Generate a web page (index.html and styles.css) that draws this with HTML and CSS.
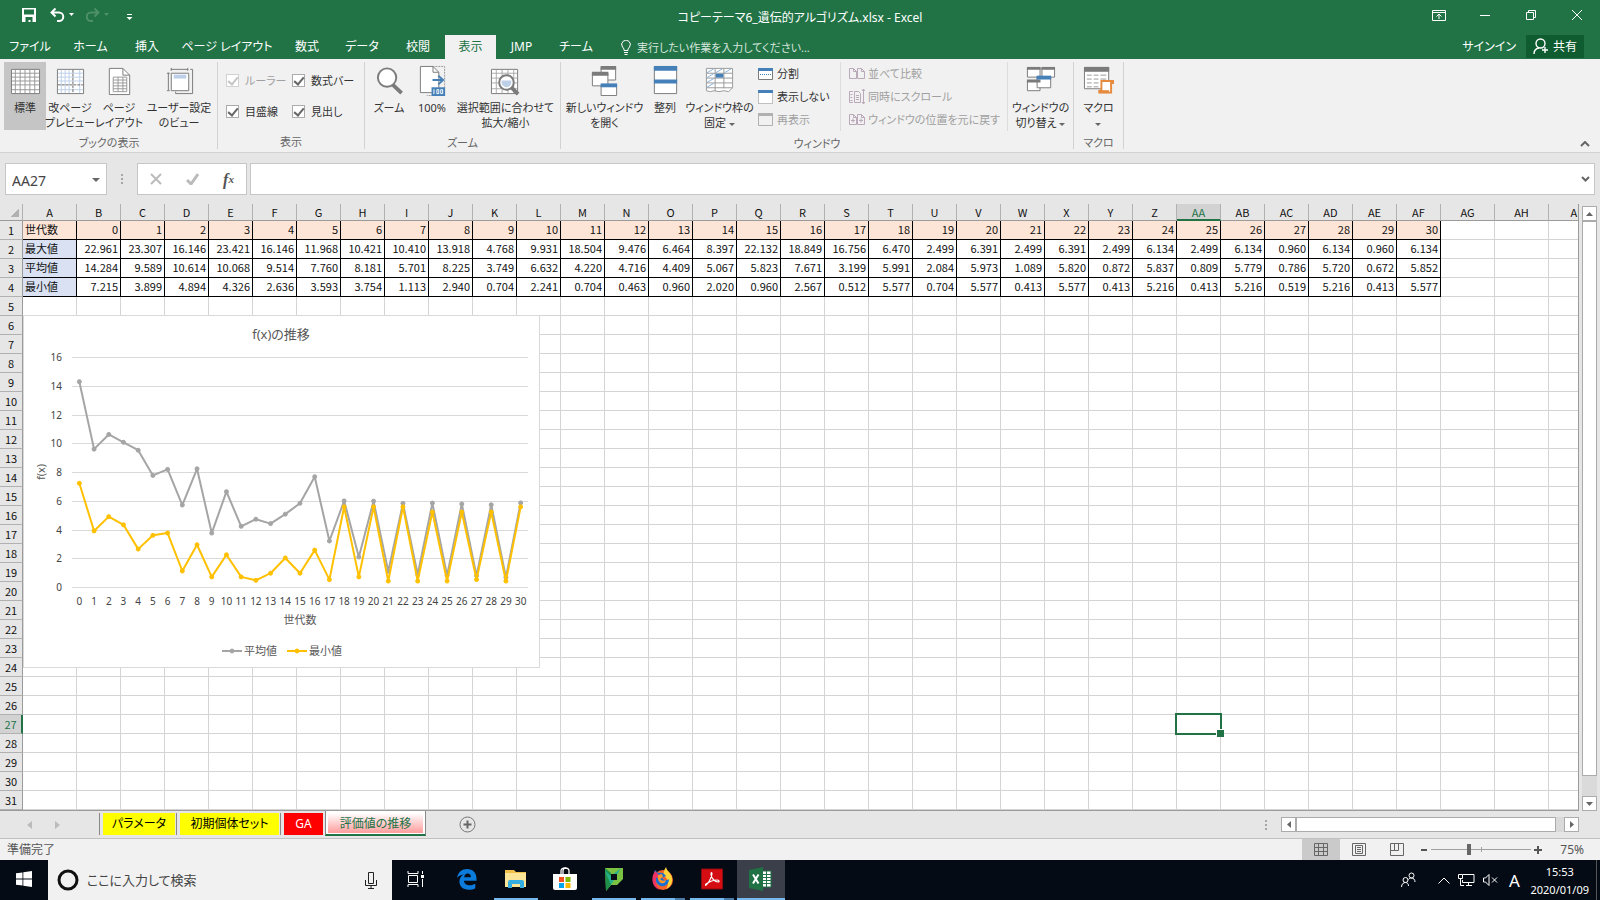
FILE: index.html
```html
<!DOCTYPE html>
<html lang="ja">
<head>
    <meta charset="UTF-8">
    <meta name="viewport" content="width=device-width, initial-scale=1.0">
    <title>コピーテーマ6_遺伝的アルゴリズム.xlsx - Excel</title>
    <link rel="stylesheet" href="styles.css">
</head>
<body>
    <header class="title-bar">
        <div class="quick-access">
            <button type="button" aria-label="上書き保存"><svg width="14" height="14" viewBox="0 0 14 14"><path d="M0 0h14v14H0z" fill="#fff"/><path d="M2 1.500h10v5H2zM3.500 9h7v5h-2v-2h-2v2h-3z" fill="#217346"/></svg></button>
            <button type="button" class="undo" aria-label="元に戻す"><svg width="24" height="14" viewBox="0 0 24 14"><path d="M5.500 0.500L1.500 4.500l4 4M1.500 4.500h7.500a4 4 0 0 1 0 8.500h-2" fill="none" stroke="#fff" stroke-width="2"/><path d="M19 5h5l-2.500 3z" fill="#fff"/></svg></button>
            <button type="button" class="redo" aria-label="やり直し"><svg width="24" height="14" viewBox="0 0 24 14"><path d="M8.500 0.500l4 4-4 4M12.500 4.500H5a4 4 0 0 0 0 8.500h2" fill="none" stroke="#4d9069" stroke-width="2"/><path d="M18 5h5l-2.500 3z" fill="#4d9069"/></svg></button>
            <button type="button" aria-label="クイック アクセス ツール バーのカスタマイズ"><svg width="7" height="8" viewBox="0 0 7 8"><path d="M1 1.500h5" stroke="#fff"/><path d="M0.500 4h6l-3 3z" fill="#fff"/></svg></button>
        </div>
        <div class="book-title">コピーテーマ6_遺伝的アルゴリズム.xlsx - Excel</div>
        <div class="window-buttons">
            <button type="button" aria-label="リボンの表示オプション"><svg width="14" height="11" viewBox="0 0 14 11"><path d="M0.500 0.500h13v10H0.500zM0.500 2.500h13M7 9V4.500M4.500 6.500L7 4l2.500 2.500" fill="none" stroke="#fff"/></svg></button>
            <button type="button" aria-label="最小化"><svg width="10" height="10" viewBox="0 0 10 10"><path d="M0 5.500h10" stroke="#fff"/></svg></button>
            <button type="button" aria-label="元に戻す(縮小)"><svg width="10" height="10" viewBox="0 0 10 10"><path d="M0.500 2.500h7v7h-7zM2.500 2.500v-2h7v7h-2" fill="none" stroke="#fff"/></svg></button>
            <button type="button" aria-label="閉じる"><svg width="10" height="10" viewBox="0 0 10 10"><path d="M0 0l10 10M10 0L0 10" stroke="#fff"/></svg></button>
        </div>
    </header>

    <nav class="ribbon-tabs">
        <div class="tab-list">
            <button type="button">ファイル</button>
            <button type="button">ホーム</button>
            <button type="button">挿入</button>
            <button type="button">ページ レイアウト</button>
            <button type="button">数式</button>
            <button type="button">データ</button>
            <button type="button">校閲</button>
            <button type="button" class="active">表示</button>
            <button type="button">JMP</button>
            <button type="button">チーム</button>
        </div>
        <label class="tell-me">
            <svg width="10" height="15" viewBox="0 0 10 15"><path d="M3 10.500V9L1.500 7a4.300 4.300 0 1 1 7 0L7 9v1.500zM3 12.500h4M3.500 14.500h3" fill="none" stroke="#fff"/></svg>
            <input type="text" aria-label="操作アシスト" placeholder="実行したい作業を入力してください...">
        </label>
        <button type="button" class="sign-in">サインイン</button>
        <button type="button" class="share">
            <svg width="16" height="17" viewBox="0 0 16 17"><circle cx="7.500" cy="5.500" r="4.500"/><path d="M1 16c0-3 2-5.500 5-6M12 9v6M9 12h6"/></svg>
            共有
        </button>
    </nav>

    <section class="ribbon">
        <div class="group group-book">
            <div class="tools">
                <button type="button" class="tool pressed">
                    <svg viewBox="0 0 32 32"><path d="M1.500 4.500h29v25h-29z" fill="#fff" stroke="#7b7b7b"/><path d="M2 8.500h28M2 12.500h28M2 16.500h28M2 20.500h28M2 25.500h28M5.500 5v24M10.500 5v24M15.500 5v24M20.500 5v24M25.500 5v24" stroke="#999"/></svg>
                    <span>標準</span>
                </button>
                <button type="button" class="tool">
                    <svg viewBox="0 0 32 32"><path d="M2.500 4.500h27v25h-27z" fill="#fff" stroke="#7b7b7b"/><path d="M3 8.500h26M3 12.500h26M3 16.500h26M3 25.500h26M6.500 5v24M10.500 5v24M14.500 5v24M25.500 5v24" stroke="#bdd0e8"/><path d="M3 20.500h26M18.500 5v24" stroke="#666" stroke-dasharray="3 1"/></svg>
                    <span>改ページ<br>プレビュー</span>
                </button>
                <button type="button" class="tool">
                    <svg viewBox="0 0 32 32"><path d="M5.500 3.500h14l7 7v20h-21z" fill="#fff" stroke="#7b7b7b"/><path d="M19.500 3.500v7h7" fill="none" stroke="#7b7b7b"/><path d="M9.500 12.500h14v15h-14zM9.500 15.500h14M9.500 18.500h14M9.500 21.500h14M9.500 24.500h14M14.500 12.500v15M19.500 12.500v15" fill="none" stroke="#999"/></svg>
                    <span>ページ<br>レイアウト</span>
                </button>
                <button type="button" class="tool">
                    <svg viewBox="0 0 32 32"><path d="M7.500 8.500h18v18h-18z" fill="#fff" stroke="#7b7b7b"/><path d="M10 10h13v4H10z" fill="#bdd0e8"/><path d="M7 4.500h18M7.500 3v3M24.500 3v3M4.500 8v18M3 8.500h3M3 26.500h3M27 4.500h2.500v25H12v-2" fill="none" stroke="#7b7b7b"/></svg>
                    <span>ユーザー設定<br>のビュー</span>
                </button>
            </div>
            <div class="group-name">ブックの表示</div>
        </div>

        <div class="group group-show">
            <div class="checks">
                <label class="disabled"><input type="checkbox" checked disabled>ルーラー</label>
                <label><input type="checkbox" checked>数式バー</label>
                <label><input type="checkbox" checked>目盛線</label>
                <label><input type="checkbox" checked>見出し</label>
            </div>
            <div class="group-name">表示</div>
        </div>

        <div class="group group-zoom">
            <div class="tools">
                <button type="button" class="tool">
                    <svg viewBox="0 0 32 32"><path d="M19 20l9.500 9" stroke="#7b7b7b" stroke-width="4"/><circle cx="13.500" cy="13" r="9.500" fill="#fff" stroke="#7b7b7b" stroke-width="2"/></svg>
                    <span>ズーム</span>
                </button>
                <button type="button" class="tool">
                    <svg viewBox="0 0 32 32"><path d="M16 1.500h12.500v30H10" fill="none" stroke="#999" stroke-dasharray="2 1"/><path d="M3.500 1.500h13l6 6v21h-19z" fill="#fff" stroke="#7b7b7b"/><path d="M16.500 1.500v6h6" fill="none" stroke="#7b7b7b"/><path d="M16 15.500h10M22 11l5 4.500-5 4.500" fill="none" stroke="#4680b8" stroke-width="2"/><path d="M15 23h14v9H15z" fill="#4680b8"/><path d="M17.500 25v5M20.500 25.500h2v4h-2zM24.500 25.500h2v4h-2z" fill="none" stroke="#fff"/></svg>
                    <span>100%</span>
                </button>
                <button type="button" class="tool">
                    <svg viewBox="0 0 32 32"><path d="M1.500 4.500h27v25h-27z" fill="#fff" stroke="#7b7b7b"/><path d="M2 8.500h26M2 13.500h26M2 18.500h26M2 24.500h26M6.500 5v24M12.500 5v24M18.500 5v24M24.500 5v24" stroke="#aaa"/><path d="M21 22l8 8" stroke="#7b7b7b" stroke-width="4"/><circle cx="17" cy="18" r="7.500" fill="#fff" stroke="#7b7b7b" stroke-width="2"/><path d="M12 16h10v2a5 5 0 0 1-10 0z" fill="#bdd0e8"/></svg>
                    <span>選択範囲に合わせて<br>拡大/縮小</span>
                </button>
            </div>
            <div class="group-name">ズーム</div>
        </div>

        <div class="group group-window">
            <div class="tools">
                <button type="button" class="tool">
                    <svg viewBox="0 0 32 32"><g fill="#fff" stroke="#7b7b7b"><path d="M12.500 2.500h15v13h-15z"/><path d="M3.500 8.500h16v13h-16z"/><path d="M12.500 20.500h16v11h-16z"/></g><path d="M12 1h16v4H12zM3 7h17v4H3z" fill="#7b7b7b"/><path d="M12 19h17v4H12z" fill="#4680b8"/></svg>
                    <span>新しいウィンドウ<br>を開く</span>
                </button>
                <button type="button" class="tool">
                    <svg viewBox="0 0 32 32"><path d="M4.500 1.500h23v28h-23z" fill="#fff" stroke="#7b7b7b"/><path d="M4 1h24v5H4zM4 15h24v4H4z" fill="#4680b8"/></svg>
                    <span>整列</span>
                </button>
                <button type="button" class="tool">
                    <svg viewBox="0 0 32 32"><path d="M2.500 3.500h27v20l-4 4-5-1-5 1-5-1-4 1-4-1z" fill="#fff" stroke="#999"/><path d="M3 8.500h26M3 13.500h26M3 18.500h26M3 23.500h26M11.500 4v23M20.500 4v20" stroke="#999"/><path d="M3 8l7-4M12 8l7-4M21 8l7-4M3 13l7-4M3 18l7-4M3 23l7-4" stroke="#8bb1dc"/><path d="M12 9h8v4h-8z" fill="#4680b8"/></svg>
                    <span>ウィンドウ枠の<br>固定 <i class="caret"></i></span>
                </button>
                <div class="small-tools">
                    <button type="button"><svg viewBox="0 0 16 16"><path d="M0.500 2.500h14v11H0.500z" fill="#fff" stroke="#7b7b7b"/><path d="M0 2h15v3H0z" fill="#4680b8"/><path d="M2 8.500h12" stroke="#4680b8" stroke-dasharray="1 1"/></svg>分割</button>
                    <button type="button"><svg viewBox="0 0 16 16"><path d="M0.500 1.500h14v13H0.500z" fill="#fff" stroke="#888" stroke-dasharray="1 1"/><path d="M0 1h15v3H0z" fill="#4680b8"/></svg>表示しない</button>
                    <button type="button" disabled><svg viewBox="0 0 16 16"><path d="M0.500 1.500h14v12H0.500z" fill="#f1f1f1" stroke="#b1b1b1"/><path d="M0 1h15v3H0z" fill="#b1b1b1"/></svg>再表示</button>
                </div>
                <div class="small-tools compare">
                    <button type="button" disabled><svg viewBox="0 0 16 16"><path d="M0.500 2.500h4l3 3v7h-7zM8.500 2.500h4l3 3v7h-7zM4.500 2.500v3h3M12.500 2.500v3h3" fill="none" stroke="#b9a9b9"/></svg>並べて比較</button>
                    <button type="button" disabled><svg viewBox="0 0 16 16"><path d="M4 2.500H0.500v11H4M5.500 2.500h4l2 2v9h-6zM7 6.500h3M7 8.500h3M7 10.500h3M1.500 5.500h2M1.500 8.500h2M1.500 11.500h2M14.500 0v15M13 2l1.500-2L16 2M13 13l1.500 2 1.500-2" fill="none" stroke="#b9a9b9"/></svg>同時にスクロール</button>
                    <button type="button" disabled><svg viewBox="0 0 16 16"><path d="M0.500 2.500h4l3 3v7h-7zM8.500 2.500h4l3 3v7h-7zM4.500 2.500v3h3M12.500 2.500v3h3M2 8.500h4M4 6.500v4M10 8.500h4M12 6.500v4" fill="none" stroke="#b9a9b9"/></svg>ウィンドウの位置を元に戻す</button>
                </div>
                <button type="button" class="tool">
                    <svg viewBox="0 0 32 32"><g fill="#fff" stroke="#7b7b7b"><path d="M2.500 2.500h13v10h-13z"/><path d="M17.500 2.500h13v10h-13z"/><path d="M2.500 16.500h13v10h-13z"/><path d="M12.500 12.500h14v11h-14z"/></g><path d="M2 2h14v3H2zM17 2h14v3H17zM2 15h14v3H2z" fill="#7b7b7b"/><path d="M12 11h15v4H12z" fill="#4680b8"/></svg>
                    <span>ウィンドウの<br>切り替え <i class="caret"></i></span>
                </button>
            </div>
            <div class="group-name">ウィンドウ</div>
        </div>

        <div class="group group-macro">
            <div class="tools">
                <button type="button" class="tool">
                    <svg viewBox="0 0 32 32"><path d="M1.500 2.500h25v22h-25z" fill="#fff" stroke="#7b7b7b"/><path d="M1 2h26v5H1z" fill="#7b7b7b"/><path d="M4 10.500h5M11 10.500h5M18 10.500h6M4 14.500h5M11 14.500h5M18 14.500h6M4 18.500h5M11 18.500h5M4 22.500h5M11 22.500h5" stroke="#999"/><path d="M19 16.500h12v2h-2v10h-12v-2h2z" fill="#fff" stroke="#e68a3e" stroke-width="2"/><path d="M16 26h11v3H16z" fill="#e68a3e"/></svg>
                    <span>マクロ<br><i class="caret"></i></span>
                </button>
            </div>
            <div class="group-name">マクロ</div>
        </div>

        <button type="button" class="collapse-ribbon" aria-label="リボンを折りたたむ"><svg width="10" height="6" viewBox="0 0 10 6"><path d="M1 5l4-4 4 4" fill="none" stroke="#666" stroke-width="2"/></svg></button>
    </section>

    <section class="formula-bar">
        <div class="name-box">
            <input type="text" value="AA27" aria-label="名前ボックス">
            <i class="caret"></i>
        </div>
        <div class="grip"></div>
        <div class="formula-buttons">
            <button type="button" aria-label="キャンセル"><svg width="12" height="12" viewBox="0 0 12 12"><path d="M1 1l10 10M11 1L1 11" stroke="#bbb" stroke-width="2"/></svg></button>
            <button type="button" aria-label="入力"><svg width="13" height="12" viewBox="0 0 13 12"><path d="M1 7l4 4 7-10" fill="none" stroke="#bbb" stroke-width="3"/></svg></button>
            <button type="button" class="fx" aria-label="関数の挿入">f<small>x</small></button>
        </div>
        <div class="formula-input">
            <input type="text" aria-label="数式バー">
            <svg width="9" height="6" viewBox="0 0 9 6"><path d="M1 1l3.500 3.500L8 1" fill="none" stroke="#666" stroke-width="2"/></svg>
        </div>
    </section>

    <main class="workspace">
        <div class="sheet">
            <table class="cells" id="cells"></table>
            <svg class="chart" id="chart" viewBox="0 0 517 353" role="img" aria-label="f(x)の推移"></svg>
        </div>
        <div class="scroll scroll-v">
            <button type="button" aria-label="上へ"><svg width="7" height="4" viewBox="0 0 7 4"><path d="M0 4l3.500-4L7 4z"/></svg></button>
            <div class="thumb"></div>
            <button type="button" aria-label="下へ"><svg width="7" height="4" viewBox="0 0 7 4"><path d="M0 0l3.500 4L7 0z"/></svg></button>
        </div>
    </main>

    <div class="sheet-bar">
        <div class="sheet-arrows">
            <svg width="5" height="8" viewBox="0 0 5 8"><path d="M5 0L0 4l5 4z"/></svg>
            <svg width="5" height="8" viewBox="0 0 5 8"><path d="M0 0l5 4-5 4z"/></svg>
        </div>
        <div class="sheet-tabs">
            <button type="button" class="yellow">パラメータ</button>
            <button type="button" class="yellow">初期個体セット</button>
            <button type="button" class="red">GA</button>
            <button type="button" class="current"><span>評価値の推移</span></button>
        </div>
        <button type="button" class="add-sheet" aria-label="新しいシート"><svg width="17" height="17" viewBox="0 0 17 17"><circle cx="8.500" cy="8.500" r="7.500" fill="none" stroke="#777"/><path d="M8.500 4.500v8M4.500 8.500h8" stroke="#666" stroke-width="2"/></svg></button>
        <div class="grip"></div>
        <div class="scroll scroll-h">
            <button type="button" aria-label="左へ"><svg width="4" height="7" viewBox="0 0 4 7"><path d="M4 0L0 3.500 4 7z"/></svg></button>
            <div class="thumb"></div>
            <button type="button" aria-label="右へ"><svg width="4" height="7" viewBox="0 0 4 7"><path d="M0 0l4 3.500L0 7z"/></svg></button>
        </div>
    </div>

    <div class="status-bar">
        <span class="status-text">準備完了</span>
        <div class="view-buttons">
            <button type="button" class="active" aria-label="標準"><svg width="14" height="13" viewBox="0 0 14 13"><path d="M0.500 0.500h13v12H0.500zM0.500 4.500h13M0.500 8.500h13M4.500 0.500v12M9.500 0.500v12"/></svg></button>
            <button type="button" aria-label="ページ レイアウト"><svg width="14" height="13" viewBox="0 0 14 13"><path d="M0.500 0.500h13v12H0.500zM3.500 2.500h7v8h-7zM5 4.500h4M5 6.500h4M5 8.500h4"/></svg></button>
            <button type="button" aria-label="改ページ プレビュー"><svg width="14" height="13" viewBox="0 0 14 13"><path d="M0.500 0.500h13v12H0.500zM4.500 0.500v7M8.500 0.500v7M0.500 7.500h8"/></svg></button>
        </div>
        <div class="zoom">
            <button type="button" aria-label="縮小"><svg width="8" height="8" viewBox="0 0 8 8"><path d="M1 4h6" stroke="#555" stroke-width="2"/></svg></button>
            <input type="range" min="0" max="100" value="37" aria-label="ズーム">
            <button type="button" aria-label="拡大"><svg width="8" height="8" viewBox="0 0 8 8"><path d="M0 4h8M4 0v8" stroke="#555" stroke-width="2"/></svg></button>
        </div>
        <span class="zoom-value">75%</span>
    </div>

    <footer class="taskbar">
        <button type="button" class="app start" aria-label="スタート"><svg width="16" height="16" viewBox="0 0 16 16"><path d="M0 2.300L6.500 1.400v6.200H0zM7.300 1.300L16 0v7.600H7.300zM0 8.400h6.500v6.200L0 13.700zM7.300 8.400H16V16l-8.700-1.300z" fill="#fff"/></svg></button>
        <label class="search">
            <svg width="22" height="22" viewBox="0 0 22 22"><circle cx="11" cy="11" r="9" fill="none" stroke="#111" stroke-width="3"/></svg>
            <input type="text" aria-label="検索" placeholder="ここに入力して検索">
            <svg width="12" height="17" viewBox="0 0 12 17"><path d="M3.500 0.500h5v11h-5zM0.500 8v5.500h11V8M6 13.500V16M3 16.500h6" fill="none" stroke="#222"/></svg>
        </label>
        <div class="apps">
            <button type="button" class="app task-view" aria-label="タスク ビュー"><svg width="18" height="16" viewBox="0 0 18 16"><path d="M1 0v2.500h10V0M1 16v-2.500h10V16M1.500 4.500h9v7h-9zM15.500 0v3M15.500 8v8" fill="none" stroke="#fff"/><path d="M14 4h3v3h-3z" fill="#fff"/></svg></button>
            <button type="button" class="app" aria-label="Microsoft Edge"><svg width="22" height="22" viewBox="0 0 22 22"><path d="M1 10C2 4 6 1 11 1c6 0 9.500 4 9.500 9.500v2.200H8c0.200 3.300 3 4.600 6 4.600 2 0 3.800-0.600 5.300-1.500v4.400c-1.700 1-4 1.600-6.600 1.600C7 21.800 3.400 18.500 3.400 13.600c0-3 1.500-5.600 4.300-7.100C4.500 6.700 2.300 8.300 1 10zM8.200 9.200h6.700c0-2.300-1.200-3.600-3.200-3.600S8.500 7 8.200 9.200z" fill="#0b7bdc"/></svg></button>
            <button type="button" class="app open" aria-label="エクスプローラー"><svg width="22" height="20" viewBox="0 0 22 20"><path d="M0 1h9l2 2h10v15H0z" fill="#f0c04a"/><path d="M0 4h21v14H0z" fill="#fde597"/><path d="M3 19v-6q0-2 2-2h12q2 0 2 2v6h-4v-4H7v4z" fill="#35aee2"/></svg></button>
            <button type="button" class="app" aria-label="Microsoft Store"><svg width="24" height="24" viewBox="0 0 24 24"><path d="M8 7V4q0-3 4-3t4 3v3M10 7V4q0-3 3-3" fill="none" stroke="#fff" stroke-width="1.300"/><path d="M0 7h24v14q0 2-2 2H2q-2 0-2-2z" fill="#fff"/><path d="M6 10h5v5H6z" fill="#f25022"/><path d="M12.500 10h5v5h-5z" fill="#7fba00"/><path d="M6 16h5v5H6z" fill="#00a4ef"/><path d="M12.500 16h5v5h-5z" fill="#ffb900"/></svg></button>
            <button type="button" class="app open" aria-label="JMP"><svg width="20" height="24" viewBox="0 0 20 24"><path d="M1 1h18v11l-6 6H7l-5 6z" fill="#7cc242"/><path d="M1 1l6 5v12l-5 6z" fill="#1f8f4c"/><path d="M1 4l6 5L17 1 7 18z" fill="#27b08d"/><path d="M7 7h6v6H7z" fill="#080d18"/></svg></button>
            <button type="button" class="app open stacked" aria-label="Firefox"><svg width="24" height="24" viewBox="0 0 24 24"><circle cx="12" cy="13" r="10" fill="#f5632a"/><path d="M15 0c1 4 3 4 5 8 3 6 0 12-5 14 3-4 3-10-2-13-1-3 0-6 2-9z" fill="#ffd43b"/><path d="M3 8c0-2 0-3 1-5l3 3c4-1 6 0 8 3l-4 2c1 2 5 3 7 1 0 5-4 8-8 7-4-1-6-5-5-8z" fill="#1572d4"/><path d="M2 8c-2 7 1 14 8 15-4-2-6-6-5-12l4-1-2-3-3-3z" fill="#ee3264"/><path d="M7 8l4-1 1 3-3 2q2 3 6 1-1 4-5 3-4-2-3-8z" fill="#ff9629"/></svg></button>
            <button type="button" class="app open stacked" aria-label="Acrobat Reader"><svg width="22" height="22" viewBox="0 0 22 22"><path d="M0.500 1h21v20H0.500z" fill="#d40d12" stroke="#8f0b0e"/><path d="M5 17c2-1 5-6 6-11 0-2-1-2-1 0 0 4 4 8 7 8 2 0 1-2-1-2-4 0-8 2-11 4-1 1 0 2 0 1z" fill="none" stroke="#fff" stroke-width="1.200"/></svg></button>
            <button type="button" class="app open focused" aria-label="Excel"><svg width="24" height="24" viewBox="0 0 24 24"><path d="M13 4h9v16h-9z" fill="#fff" stroke="#217346"/><path d="M13 7.500h9M13 10.500h9M13 13.500h9M13 16.500h9M17.500 4v16" stroke="#217346"/><path d="M0 3l14-3v24L0 21z" fill="#207245"/><path d="M4 7.500l5.500 9M9.500 7.500L4 16.500" stroke="#fff" stroke-width="2"/></svg></button>
        </div>
        <div class="tray">
            <svg width="15" height="16" viewBox="0 0 15 16"><circle cx="10.500" cy="3.500" r="2.500"/><circle cx="4.500" cy="8" r="2.500"/><path d="M0.500 15c0-3 2-4.500 4-4.500s3 1.500 3 3.500M7.500 7.500c1-1.500 2-1.500 3-1.500 2 0 3.500 1.500 3.500 4"/></svg>
            <svg class="tray-up" width="12" height="7" viewBox="0 0 12 7"><path d="M0.500 6.500L6 1l5.500 5.500"/></svg>
            <svg width="17" height="14" viewBox="0 0 17 14"><path d="M5 1.500h11v8H4.500V7M8 12.500h6M10.500 10v2M0.500 1.500h4v4h-4zM2.500 6v6.500H6"/></svg>
            <svg width="15" height="12" viewBox="0 0 15 12"><path d="M0.500 4h2L6 0.500v11L2.500 8h-2zM9 3.500l5 5M14 3.500l-5 5"/></svg>
            <span class="ime">A</span>
            <div class="clock"><span>15:53</span><span>2020/01/09</span></div>
        </div>
    </footer>
    <script src="script.js"></script>
</body>
</html>
```
FILE: styles.css
```css
* {
    box-sizing: border-box;
}

body {
    display: flex;
    flex-direction: column;
    height: 100vh;
    margin: 0;
    overflow: hidden;
    background-color: #e6e6e6;
    color: #333;
    font-family: 'Noto Sans', 'Noto Sans CJK JP', sans-serif;
    font-feature-settings: 'palt';
    font-size: 12px;
    line-height: 15px;
}

button,
input {
    margin: 0;
    padding: 0;
    border: none;
    outline: none;
    background: none;
    color: inherit;
    font: inherit;
    font-feature-settings: inherit;
}

button {
    display: flex;
    align-items: center;
    justify-content: center;
    white-space: nowrap;
}

svg {
    display: block;
    flex: none;
}

.caret {
    display: inline-block;
    border: 3px solid transparent;
    border-top-color: #666;
    border-bottom: none;
    vertical-align: middle;
}

/* title bar */
.title-bar {
    display: grid;
    grid-template-columns: 1fr auto 1fr;
    height: 35px;
    background-color: #217346;
    color: #fff;
}

.quick-access {
    display: flex;
    align-items: center;
    gap: 12px;
    height: 30px;
    padding-left: 22px;
}

.quick-access .undo {
    padding-left: 2px;
}

.quick-access button:last-child {
    padding: 4px 0 0 4px;
}

.book-title {
    align-self: center;
}

.window-buttons {
    display: flex;
    justify-content: flex-end;
    height: 30px;
}

.window-buttons button {
    width: 46px;
}

/* ribbon tabs */
.ribbon-tabs {
    display: flex;
    height: 24px;
    padding-right: 16px;
    background-color: #217346;
    color: #fff;
}

.tab-list {
    display: grid;
    grid-template-columns: 60px 61px 52px 108px 52px 58px 54px 51px 51px 58px;
}

.tab-list button,
.sign-in,
.share {
    padding-bottom: 1px;
}

.tab-list .active {
    background-color: #f1f1f1;
    color: #217346;
}

.tell-me {
    display: flex;
    flex: 1;
    align-items: center;
    gap: 6px;
    padding-left: 16px;
    font-size: 11px;
}

.tell-me input {
    width: 220px;
}

.tell-me input::placeholder {
    color: #d5e6dc;
}

.share {
    gap: 4px;
    width: 58px;
    height: 23px;
    margin-left: 10px;
    background-color: #0e5c2f;
}

.share svg {
    fill: none;
    stroke: #fff;
    stroke-width: 1.4;
}

/* ribbon */
.ribbon {
    display: flex;
    height: 94px;
    padding-top: 3px;
    border-bottom: 1px solid #d2d2d2;
    background-color: #f1f1f1;
}

.group {
    display: flex;
    flex-direction: column;
    height: 87px;
    border-right: 1px solid #d2d2d2;
}

.tools {
    display: grid;
    height: 69px;
}

.group-book {
    padding: 0 3px 0 4px;
}

.group-book .tools {
    grid-template-columns: 42px 48px 50px 70px;
}

.group-zoom .tools {
    grid-template-columns: 48px 38px 109px;
}

.group-window .tools {
    grid-template-columns: 87px 34px 75px 84px 167px 65px;
}

.group-macro .tools {
    grid-template-columns: 49px;
}

.tool {
    flex-direction: column;
    justify-content: flex-start;
    padding-top: 3px;
    font-size: 11px;
}

.tool svg {
    width: 31px;
    height: 31px;
    margin-bottom: 4px;
}

.tool.pressed {
    background-color: #c5c5c5;
}

.group-name {
    padding-top: 5px;
    color: #666;
    font-size: 11px;
    text-align: center;
}

.checks {
    display: grid;
    grid-template-columns: 66px 72px;
    grid-template-rows: 31px 31px;
    height: 69px;
    padding: 3px 0 0 8px;
    font-size: 11px;
}

.checks label {
    display: flex;
    align-items: center;
    gap: 6px;
    white-space: nowrap;
}

.checks .disabled {
    color: #a0a0a0;
}

.checks input {
    flex: none;
    width: 13px;
    height: 13px;
    border: 1px solid #ababab;
    background-color: #fff;
    appearance: none;
}

.checks input::before {
    display: block;
    width: 4px;
    height: 8px;
    margin: 0 auto;
    border: solid #666;
    border-width: 0 2px 2px 0;
    content: '';
    transform: rotate(40deg);
}

.checks input:disabled {
    border-color: #d2d2d2;
}

.checks input:disabled::before {
    border-color: #c5c5c5;
}

.small-tools {
    display: flex;
    flex-direction: column;
    margin-bottom: 3px;
    padding-left: 1px;
    border-right: 1px solid #dcdcdc;
    font-size: 11px;
}

.small-tools.compare {
    padding-left: 8px;
}

.small-tools button {
    justify-content: flex-start;
    gap: 3px;
    height: 23px;
}

.small-tools button:disabled {
    color: #a0a0a0;
}

.small-tools svg {
    width: 16px;
    height: 16px;
}

.collapse-ribbon {
    align-self: flex-end;
    margin: 0 10px 5px auto;
}

/* formula bar */
.formula-bar {
    display: flex;
    height: 51px;
    padding: 10px 5px 9px;
}

.name-box,
.formula-buttons,
.formula-input {
    display: flex;
    align-items: center;
    border: 1px solid #c6c6c6;
    background-color: #fff;
}

.name-box {
    width: 102px;
    padding: 2px 6px 0;
    color: #444;
    font-size: 14px;
}

.name-box .caret {
    border-width: 4px 4px 0;
}

.name-box input {
    flex: 1;
    min-width: 0;
}

.grip {
    display: flex;
    align-items: center;
    justify-content: center;
    width: 30px;
}

.grip::before {
    width: 2px;
    height: 10px;
    background-image: repeating-linear-gradient(#a6a6a6 0 2px, transparent 2px 4px);
    content: '';
}

.formula-buttons {
    justify-content: space-around;
    width: 110px;
}

.fx {
    color: #555;
    font-family: 'Liberation Serif', serif;
    font-size: 16px;
    font-style: italic;
    font-weight: bold;
}

.fx small {
    font-size: 11px;
}

.formula-input {
    flex: 1;
    margin-left: 3px;
    padding: 0 4px 0 6px;
}

.formula-input input {
    flex: 1;
}

/* sheet */
.workspace {
    display: flex;
    flex: 1;
    min-height: 0;
}

.sheet {
    position: relative;
    flex: 1;
    overflow: hidden;
    border-right: 1px solid #9b9b9b;
    border-bottom: 1px solid #9b9b9b;
}

.cells {
    width: 1px;
    border-spacing: 0;
    background-color: #fff;
    color: #111;
    font-family: 'Noto Sans CJK JP', sans-serif;
    font-size: 11px;
    line-height: 16px;
    table-layout: fixed;
}

.cells .col-head {
    width: 23px;
}

.cells .col-a,
.cells .col-wide {
    width: 54px;
}

.cells .col-data {
    width: 44px;
}

.cells th,
.cells td {
    height: 19px;
    padding: 0 2px 2px;
    border: solid #d4d4d4;
    border-width: 0 1px 1px 0;
    font-weight: normal;
    white-space: nowrap;
}

.cells th {
    padding: 0 0 1px;
    border-color: #b1b1b1;
    background-color: #e6e6e6;
    text-align: center;
}

.cells thead th {
    height: 17px;
    padding: 0;
    border-bottom-color: #9b9b9b;
    line-height: 15px;
}

.cells tbody th {
    border-right-color: #9b9b9b;
}

.cells thead th.picked {
    border-bottom: 2px solid #217346;
    background-color: #d2d2d2;
    color: #217346;
    line-height: 14px;
}

.cells tbody th.picked {
    border-right: 2px solid #217346;
    background-color: #d2d2d2;
    color: #217346;
}

.corner {
    background-image: linear-gradient(135deg, transparent 50%, #b1b1b1 50%);
    background-position: 10px 4px;
    background-repeat: no-repeat;
    background-size: 9px 9px;
}

.cells .filled {
    border-color: #000;
    text-align: right;
}

.cells .label {
    background-color: #d9e1f2;
    text-align: left;
}

.cells .first td.filled {
    background-color: #fce4d6;
}

.selected {
    position: relative;
}

.selected::before {
    position: absolute;
    inset: -2px;
    border: 2px solid #217346;
    content: '';
}

.selected::after {
    position: absolute;
    right: -4px;
    bottom: -4px;
    width: 7px;
    height: 7px;
    border: solid #fff;
    border-width: 1px 0 0 1px;
    background-color: #217346;
    content: '';
}

/* floats over the cells */
.chart {
    position: absolute;
    top: 111px;
    left: 23px;
    width: 517px;
    height: 353px;
    font-size: 10px;
}

.chart text {
    fill: #444;
    text-anchor: middle;
}

.chart .value-label {
    text-anchor: end;
}

.chart .legend-label {
    text-anchor: start;
}

.chart .heading {
    font-size: 13px;
    fill: #595959;
}

.chart .caption {
    font-size: 11px;
    fill: #595959;
}

.chart polyline,
.chart .key {
    fill: none;
    stroke-width: 2;
    stroke-linejoin: round;
}

.chart .gridline {
    stroke: #d9d9d9;
}

.chart .average {
    fill: #a5a5a5;
    stroke: #a5a5a5;
}

.chart .minimum {
    fill: #ffc000;
    stroke: #ffc000;
}

.chart polyline.average,
.chart polyline.minimum {
    fill: none;
}

/* scroll bars */
.scroll {
    display: flex;
    background-color: #dadada;
}

.scroll button {
    flex: none;
    width: 15px;
    height: 15px;
    border: 1px solid #ababab;
    background-color: #fff;
}

.scroll svg {
    fill: #666;
}

.scroll .thumb {
    flex: 1;
    border: 1px solid #ababab;
    background-color: #fff;
}

.scroll-v {
    flex-direction: column;
    margin: 2px 3px 0;
}

.scroll-v .thumb {
    margin-bottom: 20px;
}

.scroll-h {
    width: 298px;
    height: 15px;
    margin: 6px 21px 0 0;
}

.scroll-h .thumb {
    margin-right: 8px;
}

/* sheet tabs */
.sheet-bar {
    display: flex;
    height: 27px;
}

.sheet-arrows {
    display: flex;
    align-items: center;
    gap: 23px;
    width: 100px;
    padding-left: 27px;
    fill: #bbb;
}

.sheet-tabs {
    display: grid;
    grid-template-columns: 77px 104px 44px 101px;
}

.sheet-tabs button {
    height: 22px;
    margin: 2px 2px 0 3px;
    padding-bottom: 2px;
    color: #000;
}

.sheet-tabs .yellow {
    background-color: #ff0;
    box-shadow: -3px 0 #e6e6e6, -4px 0 #888;
}

.sheet-tabs .red {
    background-color: #f00;
    box-shadow: -3px 0 #e6e6e6, -4px 0 #888;
    color: #fff;
}

.sheet-tabs .current {
    height: 25px;
    margin: 0;
    padding: 1px 2px;
    border-right: 1px solid #888;
    border-bottom: 2px solid #217346;
    border-left: 1px solid #888;
    background-color: #fff;
    color: #217346;
}

.sheet-tabs .current span {
    width: 100%;
    padding: 3px 0 2px;
    background-image: linear-gradient(#fff, #ff9c9c);
}

.add-sheet {
    margin-left: 33px;
}

.sheet-bar .grip {
    margin-left: auto;
}

/* status bar */
.status-bar {
    display: flex;
    align-items: center;
    height: 22px;
    padding: 0 16px 0 7px;
    border-top: 1px solid #c1c1c1;
    background-color: #f1f1f1;
    color: #555;
}

.view-buttons {
    display: flex;
    height: 100%;
    margin-left: auto;
}

.view-buttons button {
    width: 38px;
}

.view-buttons .active {
    background-color: #cacaca;
}

.view-buttons svg {
    fill: none;
    stroke: #666;
}

.zoom {
    display: flex;
    align-items: center;
    gap: 3px;
    margin-left: 4px;
}

.zoom input {
    width: 100px;
    height: 12px;
    background: linear-gradient(#a0a0a0, #a0a0a0) center / 100% 1px no-repeat,
        linear-gradient(#a0a0a0, #a0a0a0) center / 1px 5px no-repeat;
    appearance: none;
}

.zoom input::-webkit-slider-thumb {
    width: 4px;
    height: 11px;
    background-color: #666;
    appearance: none;
}

.zoom-value {
    width: 42px;
    text-align: right;
}

/* taskbar */
.taskbar {
    display: flex;
    height: 40px;
    background-color: #050b14;
    color: #fff;
}

.app {
    width: 48px;
    height: 40px;
    border-bottom: 2px solid transparent;
}

.search {
    display: flex;
    align-items: center;
    gap: 8px;
    width: 344px;
    padding: 0 15px 0 9px;
    background-color: #f1f1f1;
    color: #444;
    font-size: 13px;
}

.search input {
    flex: 1;
    min-width: 0;
}

.search input::placeholder {
    color: #444;
}

.apps {
    display: flex;
    gap: 1px;
}

.task-view {
    margin-right: 2px;
}

.app.open {
    border-image: linear-gradient(90deg, transparent 4px, #76b9ed 4px, #76b9ed 44px, transparent 44px) 2;
    border-width: 0 0 2px;
}

.app.stacked {
    border-image: linear-gradient(90deg, transparent 4px, #76b9ed 4px, #76b9ed 35px, #4a7ba6 35px, #4a7ba6 44px, transparent 44px) 2;
}

.app.focused {
    border-image: none;
    border-color: #76b9ed;
    background-color: #3a3f49;
}

.tray {
    display: flex;
    align-items: center;
    margin-left: auto;
    margin-right: 3px;
    padding-right: 7px;
    gap: 8px;
    border-right: 1px solid #555;
}

.tray svg {
    fill: none;
    stroke: #fff;
}

.tray-up {
    margin-left: 14px;
}

.ime {
    width: 16px;
    font-size: 17px;
    text-align: center;
}

.clock {
    display: flex;
    flex-direction: column;
    align-items: center;
    gap: 3px;
    font-size: 11px;
}
```
FILE: script.js
```javascript
const generations = Array.from({ length: 31 }, (_, i) => i);

const maximum = ['22.961', '23.307', '16.146', '23.421', '16.146', '11.968', '10.421', '10.410', '13.918', '4.768', '9.931',
    '18.504', '9.476', '6.464', '8.397', '22.132', '18.849', '16.756', '6.470', '2.499', '6.391', '2.499', '6.391', '2.499',
    '6.134', '2.499', '6.134', '0.960', '6.134', '0.960', '6.134'];
const average = ['14.284', '9.589', '10.614', '10.068', '9.514', '7.760', '8.181', '5.701', '8.225', '3.749', '6.632',
    '4.220', '4.716', '4.409', '5.067', '5.823', '7.671', '3.199', '5.991', '2.084', '5.973', '1.089', '5.820', '0.872',
    '5.837', '0.809', '5.779', '0.786', '5.720', '0.672', '5.852'];
const minimum = ['7.215', '3.899', '4.894', '4.326', '2.636', '3.593', '3.754', '1.113', '2.940', '0.704', '2.241',
    '0.704', '0.463', '0.960', '2.020', '0.960', '2.567', '0.512', '5.577', '0.704', '5.577', '0.413', '5.577', '0.413',
    '5.216', '0.413', '5.216', '0.519', '5.216', '0.413', '5.577'];

const rows = [
    ['世代数', ...generations],
    ['最大値', ...maximum],
    ['平均値', ...average],
    ['最小値', ...minimum]
];

const columnCount = 35;
const rowCount = 31;
const selectedColumn = 26;
const selectedRow = 27;

function columnName(index) {
    const letter = String.fromCharCode(65 + index % 26);
    return index < 26 ? letter : 'A' + letter;
}

function columnClass(index) {
    if (index === 0) return 'col-a';
    return index < 32 ? 'col-data' : 'col-wide';
}

function drawCells() {
    let cols = '<col class="col-head">';
    let head = '<th class="corner"></th>';
    for (let c = 0; c < columnCount; c++) {
        cols += `<col class="${columnClass(c)}">`;
        head += `<th scope="col"${c === selectedColumn ? ' class="picked"' : ''}>${columnName(c)}</th>`;
    }

    let body = '';
    for (let r = 1; r <= rowCount; r++) {
        const values = rows[r - 1] || [];
        body += `<tr${r === 1 ? ' class="first"' : ''}><th scope="row"${r === selectedRow ? ' class="picked"' : ''}>${r}</th>`;
        for (let c = 0; c < columnCount; c++) {
            if (c < values.length) {
                body += `<td class="filled${c === 0 ? ' label' : ''}">${values[c]}</td>`;
            } else if (r === selectedRow && c === selectedColumn) {
                body += '<td class="selected"></td>';
            } else {
                body += '<td></td>';
            }
        }
        body += '</tr>';
    }

    document.getElementById('cells').innerHTML =
        `<colgroup>${cols}</colgroup><thead><tr>${head}</tr></thead><tbody>${body}</tbody>`;
}

function drawChart() {
    const left = 49;
    const right = 505;
    const top = 42;
    const bottom = 272;
    const step = (right - left) / generations.length;
    const xOf = i => left + step * (i + 0.5);
    const yOf = v => bottom - v * (bottom - top) / 16;

    let svg = '<rect x="0.5" y="0.5" width="516" height="352" fill="#fff" stroke="#d9d9d9"/>';
    svg += '<text class="heading" x="258" y="24">f(x)の推移</text>';

    for (let v = 0; v <= 16; v += 2) {
        const y = Math.round(yOf(v)) + 0.5;
        svg += `<line class="gridline" x1="${left}" x2="${right}" y1="${y}" y2="${y}"/>`;
        svg += `<text class="value-label" x="39" y="${y + 3}">${v}</text>`;
    }
    generations.forEach(i => {
        svg += `<text x="${xOf(i)}" y="290">${i}</text>`;
    });

    [['average', average], ['minimum', minimum]].forEach(([name, values]) => {
        const points = values.map((v, i) => [xOf(i), yOf(v)]);
        svg += `<polyline class="${name}" points="${points.join(' ')}"/>`;
        points.forEach(([x, y]) => {
            svg += `<circle class="${name}" cx="${x}" cy="${y}" r="2"/>`;
        });
    });

    svg += '<text class="caption" x="277" y="309">世代数</text>';
    svg += '<text class="caption" transform="translate(22 157) rotate(-90)">f(x)</text>';
    svg += '<path class="key average" d="M199 336h20"/><circle class="average" cx="209" cy="336" r="2"/>';
    svg += '<text class="caption legend-label" x="221" y="340">平均値</text>';
    svg += '<path class="key minimum" d="M264 336h20"/><circle class="minimum" cx="274" cy="336" r="2"/>';
    svg += '<text class="caption legend-label" x="286" y="340">最小値</text>';

    document.getElementById('chart').innerHTML = svg;
}

drawCells();
drawChart();
```
